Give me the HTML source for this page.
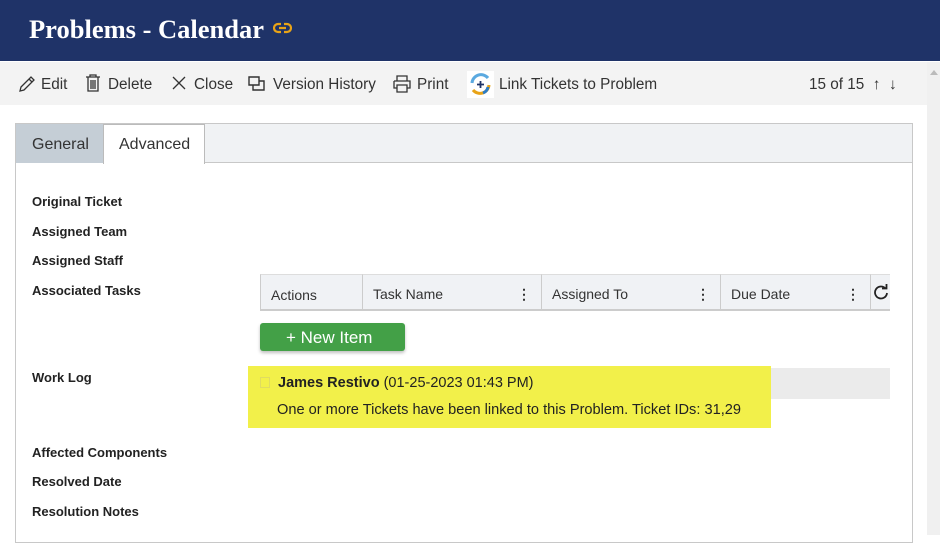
<!DOCTYPE html>
<html><head><style>
*{box-sizing:border-box;margin:0;padding:0}
body{width:940px;height:535px;overflow:hidden;background:#fff;font-family:"Segoe UI","Liberation Sans",sans-serif;position:relative;color:#333}
.a{position:absolute}
.hdr{left:0;top:0;width:940px;height:61px;background:#1f3368}
.ttl{left:29px;top:14px;font:bold 26.5px "Liberation Serif",serif;color:#fff}
.tb{left:0;top:62px;width:927px;height:43px;background:#f3f3f3}
.sb{left:927px;top:62px;width:13px;height:473px;background:#f0f0f0}
.ti{top:76px;font-size:15.3px;color:#333}
.lbl{left:32px;font-size:13px;font-weight:bold;color:#222}
.gh{top:274px;height:37px;background:#f0f2f5;border-top:1px solid #ddd;border-bottom:2px solid #ccc;border-left:1px solid #ccc;font-size:14px;padding:11px 0 0 10px;color:#333}
.dots{position:absolute;right:10px;top:11px;font-weight:bold}
</style></head><body>
<div class="a hdr"></div>
<div class="a ttl">Problems - Calendar</div>
<svg class="a" style="left:273px;top:22px" width="19" height="12" viewBox="0 0 19 12" fill="none" stroke="#e8a317" stroke-width="2.2"><path d="M8 2H5a4 4 0 0 0 0 8h3M11 2h3a4 4 0 0 1 0 8h-3M6 6h7"/></svg>
<div class="a tb"></div>
<div class="a sb"></div>
<div class="a" style="left:930px;top:66px;width:0;height:0;border:4px solid transparent;border-bottom:5px solid #bbb"></div>
<svg class="a" style="left:18px;top:75px" width="18" height="18" viewBox="0 0 18 18" fill="none" stroke="#333" stroke-width="1.3"><path d="M2 16l1-4L13 2l3 3L6 15z M11 4l3 3"/></svg>
<div class="a ti" style="left:41px">Edit</div>
<svg class="a" style="left:85px;top:74px" width="16" height="18" viewBox="0 0 16 18" fill="none" stroke="#333" stroke-width="1.3"><path d="M1 3h14M5 3V1h6v2M3 3v14h10V3M6 6v9M8 6v9M10 6v9"/></svg>
<div class="a ti" style="left:108px">Delete</div>
<svg class="a" style="left:172px;top:76px" width="14" height="14" stroke="#333" stroke-width="1.3"><path d="M1 1l12 12M13 1L1 13"/></svg>
<div class="a ti" style="left:194px">Close</div>
<svg class="a" style="left:248px;top:76px" width="18" height="16" fill="none" stroke="#333" stroke-width="1.4"><path d="M1 1h10v8H1zM5 9v5h11V5h-5"/></svg>
<div class="a ti" style="left:273px">Version History</div>
<svg class="a" style="left:393px;top:75px" width="18" height="18" fill="none" stroke="#333" stroke-width="1.3"><path d="M4 6V1h10v5M1 6h16v7h-3M4 13H1V6M4 10h10v7H4z"/></svg>
<div class="a ti" style="left:417px">Print</div>
<svg class="a" style="left:467px;top:71px" width="27" height="27" viewBox="0 0 27 27"><rect width="27" height="27" fill="#fff"/><path d="M5 12a9 9 0 0 1 16-5" stroke="#5aa9e0" stroke-width="3" fill="none"/><path d="M22 14a9 9 0 0 1-16 5" stroke="#e8a317" stroke-width="3" fill="none"/><path d="M21 16a8 8 0 0 1-5 6" stroke="#2b7cc7" stroke-width="3" fill="none"/><path d="M10 13.5h7M13.5 10v7" stroke="#1f3368" stroke-width="1.8"/></svg>
<div class="a ti" style="left:499px">Link Tickets to Problem</div>
<div class="a ti" style="left:809px">15 of 15 &nbsp;<b>&#8593;</b> &nbsp;<b>&#8595;</b></div>
<div class="a" style="left:15px;top:123px;width:898px;height:420px;border:1px solid #c8c8c8;background:#fff"></div>
<div class="a" style="left:16px;top:124px;width:896px;height:39px;background:#f0f2f4;border-bottom:1px solid #c8c8c8"></div>
<div class="a" style="left:16px;top:124px;width:87px;height:39px;background:#c5ced6;font-size:16px;padding:12px 0 0 16px">General</div>
<div class="a" style="left:103px;top:124px;width:102px;height:40px;background:#fff;border:1px solid #bbb;border-bottom:none;font-size:16px;padding:11px 0 0 15px">Advanced</div>
<div class="a lbl" style="top:194px">Original Ticket</div>
<div class="a lbl" style="top:224px">Assigned Team</div>
<div class="a lbl" style="top:253px">Assigned Staff</div>
<div class="a lbl" style="top:283px">Associated Tasks</div>
<div class="a lbl" style="top:370px">Work Log</div>
<div class="a lbl" style="top:445px">Affected Components</div>
<div class="a lbl" style="top:474px">Resolved Date</div>
<div class="a lbl" style="top:504px">Resolution Notes</div>
<div class="a gh" style="left:260px;width:102px;padding-top:12px">Actions</div>
<div class="a gh" style="left:362px;width:179px">Task Name<span class="dots">&#8942;</span></div>
<div class="a gh" style="left:541px;width:179px">Assigned To<span class="dots">&#8942;</span></div>
<div class="a gh" style="left:720px;width:150px">Due Date<span class="dots">&#8942;</span></div>
<div class="a gh" style="left:870px;width:20px;padding:0"><svg style="position:absolute;left:2px;top:9px" width="16" height="16" viewBox="0 0 16 16" fill="none" stroke="#222" stroke-width="1.8"><path d="M12.5 4.5A6 6 0 1 0 14 9"/><path d="M9 4.5h4.5V0" /></svg></div>
<div class="a" style="left:260px;top:323px;width:145px;height:28px;background:#43a047;border-radius:3px;box-shadow:0 2px 3px rgba(0,0,0,.25);color:#fff;font-size:17px;padding:5px 0 0 26px">+ New Item</div>
<div class="a" style="left:771px;top:368px;width:119px;height:31px;background:#ebebeb"></div>
<div class="a" style="left:248px;top:366px;width:523px;height:62px;background:#f2f04a"></div>
<div class="a" style="left:260px;top:377px;width:10px;height:11px;border:1px solid #e0dc60"></div>
<div class="a" style="left:278px;top:375px;font-size:14.5px;color:#222"><b>James Restivo</b> (01-25-2023 01:43 PM)</div>
<div class="a" style="left:277px;top:402px;font-size:14.6px;color:#222">One or more Tickets have been linked to this Problem. Ticket IDs: 31,29</div>
</body></html>
